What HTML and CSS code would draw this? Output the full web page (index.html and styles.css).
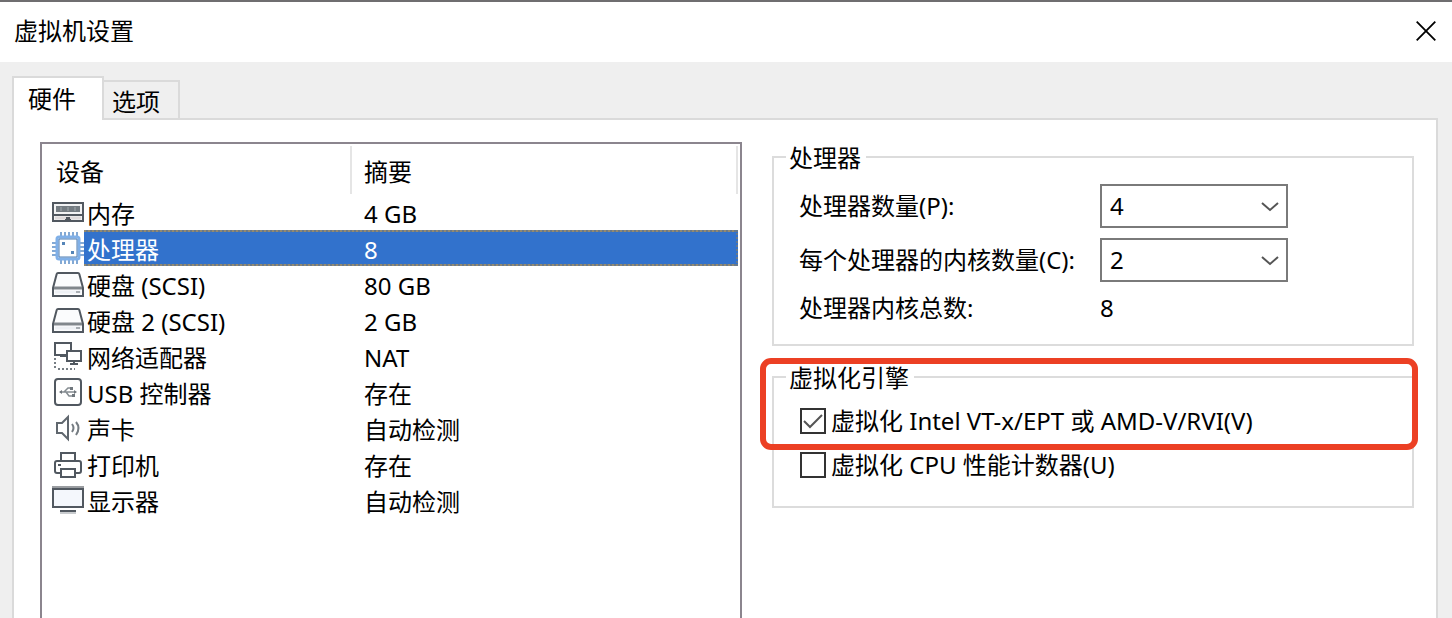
FILE: index.html
```html
<!DOCTYPE html>
<html lang="zh-CN">
<head>
<meta charset="utf-8">
<meta name="viewport" content="width=device-width, initial-scale=1">
<title>虚拟机设置</title>
<link rel="stylesheet" href="styles.css">
</head>
<body>
<div class="dialog">
  <header class="titlebar">
    <h1 class="title">虚拟机设置</h1>
    <button class="close" type="button" aria-label="关闭">
      <svg viewBox="0 0 20 20" width="20" height="20"><path d="M.7 .7 19.3 19.3M19.3 .7 .7 19.3" stroke="#000" stroke-width="1.8" fill="none"/></svg>
    </button>
  </header>
  <nav class="tabs" role="tablist">
    <button class="tab tab-active" type="button" role="tab" aria-selected="true">硬件</button>
    <button class="tab" type="button" role="tab" aria-selected="false">选项</button>
  </nav>
  <main class="panel">
    <div class="list">
      <table class="devices">
        <colgroup><col class="col-icon"><col class="col-name"><col></colgroup>
        <thead>
          <tr><th colspan="2" scope="col">设备</th><th scope="col">摘要</th></tr>
        </thead>
        <tbody>
          <tr>
            <td class="icon"><svg viewBox="0 0 32 32"><path d="M1 7h30v18H1z" fill="#f2f3f4" stroke="#515860" stroke-width="2"/><path d="M4 10h24v6H4z" fill="#747c82"/><path d="M9 11v4M16 11v4M23 11v4" stroke="#8b9398" stroke-width="2"/><path d="M2 19h28" stroke="#515860" stroke-width="2"/><path d="M3 22h26" stroke="#dfdbdc" stroke-width="3"/><path d="M13 24v-1h1v-2h4v2h1v1z" fill="#515860"/></svg></td>
            <td>内存</td><td>4 GB</td>
          </tr>
          <tr class="selected">
            <td class="icon"><svg viewBox="0 0 32 32"><path d="M9 0v6M13 0v6M17 0v6M21 0v6M25 0v6M9 26v6M13 26v6M17 26v6M21 26v6M25 26v6M0 11h6M0 15h6M0 19h6M0 23h6M26 11h6M26 15h6M26 19h6M26 23h6" stroke="#83a9d4" stroke-width="2"/><rect x="5" y="5" width="22" height="22" rx="2" fill="#fff" stroke="#80b0e8" stroke-width="3"/><path d="M7 7h18v18H7z" fill="none" stroke="#4c7db2"/><path d="M10 10h3v3h-3zM19 19h3v3h-3z" fill="#5585b8"/></svg></td>
            <td>处理器</td><td>8</td>
          </tr>
          <tr>
            <td class="icon"><svg viewBox="0 0 32 32"><path d="M6 5h20q1 0 1.300 1L31 20v8H1v-8L4.700 6Q5 5 6 5z" fill="#fbfcfd" stroke="#515860" stroke-width="2"/><path d="M2 20h28" stroke="#81878c" stroke-width="3"/><path d="M3 24h26" stroke="#eef1f5" stroke-width="3"/><path d="M24 24h4" stroke="#a8adb2" stroke-width="2"/></svg></td>
            <td>硬盘 (SCSI)</td><td>80 GB</td>
          </tr>
          <tr>
            <td class="icon"><svg viewBox="0 0 32 32"><path d="M6 5h20q1 0 1.300 1L31 20v8H1v-8L4.700 6Q5 5 6 5z" fill="#fbfcfd" stroke="#515860" stroke-width="2"/><path d="M2 20h28" stroke="#81878c" stroke-width="3"/><path d="M3 24h26" stroke="#eef1f5" stroke-width="3"/><path d="M24 24h4" stroke="#a8adb2" stroke-width="2"/></svg></td>
            <td>硬盘 2 (SCSI)</td><td>2 GB</td>
          </tr>
          <tr>
            <td class="icon"><svg viewBox="0 0 32 32"><g fill="none" stroke="#515860" stroke-width="2"><path d="M3 3h16v12H3z" fill="#fff"/><path d="M8 16h6"/><path d="M15 11h14v10H15z" fill="#fff"/><path d="M22 21v4M18 24h8"/><path d="M3 18v11M6 29h17" stroke="#777e84" stroke-dasharray="2 2"/></g></svg></td>
            <td>网络适配器</td><td>NAT</td>
          </tr>
          <tr>
            <td class="icon"><svg viewBox="0 0 32 32"><rect x="3" y="3" width="26" height="26" rx="3" fill="#fff" stroke="#515860" stroke-width="2"/><path d="M8 16h14M12 16l4-4h3M14 16l3 4h4" fill="none" stroke="#858c91" stroke-width="1.500"/><path d="M7 16l3-2v4zM18 11h3v3h-3zM20 18h3v3h-3zM22 14l3 2-3 2z" fill="#70777d"/></svg></td>
            <td>USB 控制器</td><td>存在</td>
          </tr>
          <tr>
            <td class="icon"><svg viewBox="0 0 32 32"><path d="M5 11h5l6-6v22l-6-6H5z" fill="#fff" stroke="#60676e" stroke-width="2"/><path d="M20 12q3 4 0 8M24 10q5 6 0 13" fill="none" stroke="#757c82" stroke-width="2"/></svg></td>
            <td>声卡</td><td>自动检测</td>
          </tr>
          <tr>
            <td class="icon"><svg viewBox="0 0 32 32"><g fill="#fff" stroke="#515860" stroke-width="2"><path d="M9 14V5h14v9"/><path d="M8 25H5q-2 0-2-2v-8q0-2 2-2h22q2 0 2 2v8q0 2-2 2h-3"/><path d="M9 21h14v8H9z"/></g><path d="M6 16h3v2H6z" fill="#515860"/></svg></td>
            <td>打印机</td><td>存在</td>
          </tr>
          <tr>
            <td class="icon"><svg viewBox="0 0 32 32"><path d="M0 2h32v3H0z" fill="#9a9da1"/><path d="M1 5h30v18H1z" fill="#f4f7fc" stroke="#515860" stroke-width="2"/><path d="M8 27h16" stroke="#515860" stroke-width="2"/><path d="M8 29h16" stroke="#c9cccf" stroke-width="2"/></svg></td>
            <td>显示器</td><td>自动检测</td>
          </tr>
        </tbody>
      </table>
    </div>
    <form class="settings">
      <fieldset class="group">
        <legend>处理器</legend>
        <div class="fields">
          <label for="cpus">处理器数量(P):</label>
          <select id="cpus"><option>1</option><option>2</option><option selected>4</option></select>
          <label for="cores">每个处理器的内核数量(C):</label>
          <select id="cores"><option>1</option><option selected>2</option><option>4</option></select>
          <span>处理器内核总数:</span>
          <output for="cpus cores">8</output>
        </div>
      </fieldset>
      <div class="engine">
        <fieldset class="group">
          <legend>虚拟化引擎</legend>
          <div class="checks">
            <label class="check"><input type="checkbox" checked><span>虚拟化 Intel VT-x/EPT 或 AMD-V/RVI(V)</span></label>
            <label class="check"><input type="checkbox"><span>虚拟化 CPU 性能计数器(U)</span></label>
          </div>
        </fieldset>
        <div class="highlight" aria-hidden="true"></div>
      </div>
    </form>
  </main>
</div>
</body>
</html>
```
FILE: styles.css
```css
* {
  box-sizing: border-box;
}

body {
  margin: 0;
  background: #efefef;
  color: #000;
  font-family: "Noto Sans", "Noto Sans CJK SC", sans-serif;
  font-size: 24px;
  line-height: 32px;
}

button,
select,
input {
  font: inherit;
  color: inherit;
}

.dialog {
  display: flex;
  flex-direction: column;
  min-height: 100vh;
  border-top: 2px solid #6f6e70;
}

.titlebar {
  display: flex;
  align-items: center;
  justify-content: space-between;
  height: 60px;
  padding: 0 16px 3px 14px;
  background: #fff;
}

.title {
  margin: 0;
  font-size: 24px;
  font-weight: 400;
}

.close {
  display: flex;
  padding: 0;
  border: 0;
  background: none;
}

.tabs {
  display: flex;
  align-items: flex-end;
  padding: 14px 12px 0;
}

.tab {
  height: 38px;
  padding: 4px 18px 0 8px;
  border: 2px solid #dadada;
  border-width: 2px 2px 0 0;
  background: #efefef;
}

.tab-active {
  z-index: 1;
  height: 44px;
  margin-bottom: -2px;
  padding: 0 26px 0 14px;
  border-left-width: 2px;
  background: #fff;
}

.panel {
  display: grid;
  grid-template-columns: 702fr 642fr;
  flex: 1;
  gap: 30px;
  margin: 0 14px 0 12px;
  padding: 22px 22px 0 26px;
  border: 2px solid #dadada;
  border-bottom: 0;
  background: #fff;
}

.list {
  padding: 2px 2px 0 0;
  border: 2px solid #8b858e;
  border-bottom: 0;
}

.devices {
  width: 100%;
  table-layout: fixed;
  border-collapse: separate;
  border-spacing: 0;
}

.col-icon {
  width: 42px;
}

.col-name {
  width: 268px;
}

.devices th {
  height: 48px;
  padding: 4px 12px 0;
  border-right: 2px solid #e5e5e5;
  font-weight: 400;
  text-align: left;
}

.devices th:first-child {
  padding-left: 14px;
}

.devices td {
  height: 36px;
  padding: 3px 0 0 12px;
  white-space: nowrap;
}

.devices td:nth-child(2) {
  padding-left: 3px;
}

.devices .icon {
  padding: 0 0 0 10px;
}

.icon svg {
  display: block;
  width: 32px;
  height: 32px;
}

.selected td:not(.icon) {
  background:
    repeating-linear-gradient(90deg, #938a70 0 2px, #69798a 2px 4px) top / 100% 2px no-repeat,
    repeating-linear-gradient(90deg, #938a70 0 2px, #69798a 2px 4px) bottom / 100% 2px no-repeat,
    #3272cc;
  color: #fff;
}

.selected td:last-child {
  border-right: 2px dotted #69798a;
}

.group {
  min-width: 0;
  margin: 0;
  padding: 0 25px;
  border: 2px solid #dcdcdc;
}

.group legend {
  margin-left: -13px;
  padding: 2px 5px 0 3px;
  line-height: 28px;
}

.fields {
  display: grid;
  grid-template-columns: 301px 188px;
  gap: 10px 0;
  align-items: center;
  padding: 12px 0 20px;
}

.fields select {
  height: 44px;
  padding: 0 8px;
  appearance: none;
  border: 2px solid #7a7a7a;
  border-radius: 0;
  background: #fff url("data:image/svg+xml,%3Csvg xmlns='http://www.w3.org/2000/svg' width='18' height='14'%3E%3Cpath d='M1 4l8 7 8-7' fill='none' stroke='%23555' stroke-width='2'/%3E%3C/svg%3E") right 7px center no-repeat;
}

.engine {
  position: relative;
  margin-top: 16px;
}

.checks {
  padding: 7px 0 19px;
}

.check {
  display: flex;
  align-items: center;
  gap: 5px;
  height: 44px;
  padding-left: 1px;
  white-space: nowrap;
}

.check input {
  width: 26px;
  height: 26px;
  margin: 0;
  appearance: none;
  border: 2px solid #333;
  background: #fff;
}

.check input:checked {
  background: url("data:image/svg+xml,%3Csvg xmlns='http://www.w3.org/2000/svg' width='22' height='22'%3E%3Cpath d='M2 11l6 6L20 5' fill='none' stroke='%23555' stroke-width='2'/%3E%3C/svg%3E") center no-repeat;
}

.highlight {
  position: absolute;
  top: -4px;
  right: -4px;
  left: -12px;
  height: 92px;
  border: 6px solid #ec4024;
  border-radius: 11px;
  pointer-events: none;
}
```
